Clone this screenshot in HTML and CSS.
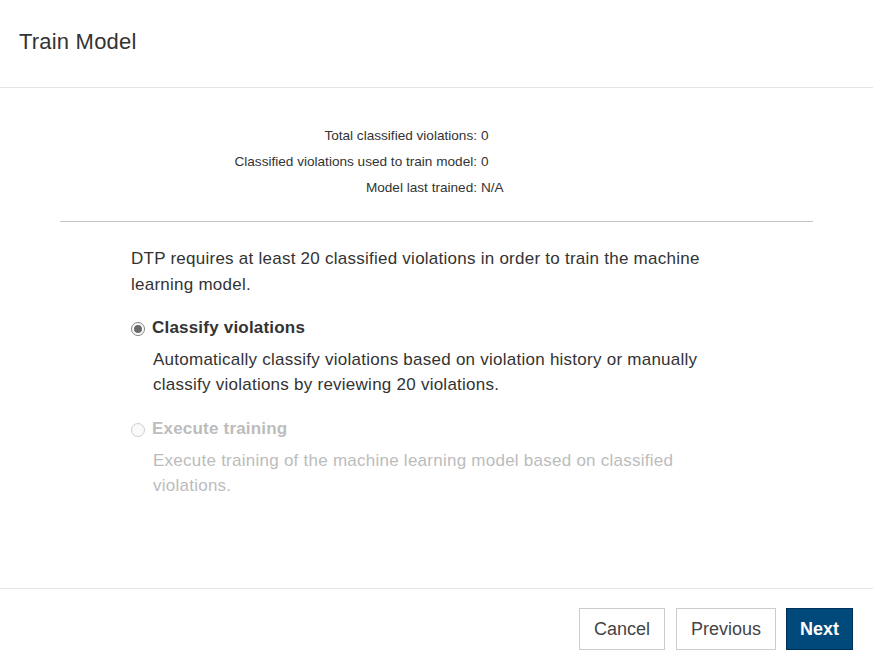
FILE: index.html
```html
<!DOCTYPE html>
<html>
<head>
<meta charset="utf-8">
<link rel="stylesheet" href="styles.css">
</head>
<body>
<div class="dialog">
  <header class="header">
    <h1 class="title">Train Model</h1>
  </header>
  <main class="content">
    <div class="stats">
      <span class="label">Total classified violations:</span><span class="value">0</span>
      <span class="label">Classified violations used to train model:</span><span class="value">0</span>
      <span class="label">Model last trained:</span><span class="value">N/A</span>
    </div>
    <hr class="divider">
    <div class="body">
      <p class="intro">DTP requires at least 20 classified violations in order to train the machine learning model.</p>
      <div class="option">
        <label class="option-label">
          <span class="radio checked"></span>
          <span class="option-title">Classify violations</span>
        </label>
        <p class="option-desc">Automatically classify violations based on violation history or manually classify violations by reviewing 20 violations.</p>
      </div>
      <div class="option disabled">
        <label class="option-label">
          <span class="radio"></span>
          <span class="option-title">Execute training</span>
        </label>
        <p class="option-desc">Execute training of the machine learning model based on classified violations.</p>
      </div>
    </div>
  </main>
  <footer class="footer">
    <button class="btn">Cancel</button>
    <button class="btn">Previous</button>
    <button class="btn primary">Next</button>
  </footer>
</div>
</body>
</html>
```

FILE: styles.css
```css
html, body {
  margin: 0;
  padding: 0;
  background: #fff;
}
body {
  font-family: "Liberation Sans", Arial, sans-serif;
  color: #333;
}
.dialog {
  display: flex;
  flex-direction: column;
  height: 670px;
}
.header {
  border-bottom: 1px solid #e5e5e5;
  display: flex;
  align-items: center;
  padding: 0 19px;
  box-sizing: border-box;
  height: 88px;
}
.title {
  margin: 0;
  font-size: 22px;
  font-weight: normal;
  color: #333;
  padding-bottom: 3px;
  letter-spacing: 0.2px;
}
.content {
  flex: 1;
}
.stats {
  display: grid;
  grid-template-columns: 477px auto;
  column-gap: 4px;
  margin-top: 35px;
  font-size: 13.6px;
  line-height: 26px;
  color: #333;
}
.stats .label {
  text-align: right;
}
.divider {
  margin: 20px 60px 0 60px;
  border: 0;
  border-top: 1px solid #c4c4c4;
  height: 0;
}
.body {
  margin-left: 131px;
  width: 600px;
  padding-top: 24px;
}
.intro {
  margin: 0;
  font-size: 17px;
  line-height: 26px;
  letter-spacing: 0.25px;
}
.option {
  margin-top: 17px;
}
.option + .option {
  margin-top: 19px;
}
.option-label {
  display: flex;
  align-items: center;
  height: 26px;
}
.radio {
  width: 12px;
  height: 12px;
  border: 1px solid #808080;
  border-radius: 50%;
  background: #fff;
  display: flex;
  align-items: center;
  justify-content: center;
  margin-right: 7px;
  margin-top: 1px;
  flex: none;
}
.radio.checked::after {
  content: "";
  width: 8px;
  height: 8px;
  border-radius: 50%;
  background: #6b6b6b;
}
.option-title {
  font-size: 17px;
  font-weight: bold;
  color: #333;
  letter-spacing: 0.2px;
}
.option-desc {
  margin: 6px 0 0 22px;
  font-size: 17px;
  line-height: 25px;
  letter-spacing: 0.25px;
}
.option.disabled .option-title,
.option.disabled .option-desc {
  color: #bcbcbc;
}
.option.disabled .radio {
  border-color: #cfcfcf;
  background: #fafafa;
}
.footer {
  border-top: 1px solid #e5e5e5;
  padding: 19px 20px 20px 20px;
  display: flex;
  justify-content: flex-end;
  gap: 10px;
}
.btn {
  height: 42px;
  padding: 0 14px;
  font-family: "Liberation Sans", Arial, sans-serif;
  font-size: 18px;
  color: #444;
  background: #fff;
  border: 1px solid #cccccc;
  border-radius: 0;
  cursor: pointer;
}
.btn:first-child {
  margin-right: 1px;
}
.btn.primary {
  background: #004a7b;
  border-color: #00305a;
  color: #fff;
  font-weight: bold;
  padding: 0 13px;
}
```
